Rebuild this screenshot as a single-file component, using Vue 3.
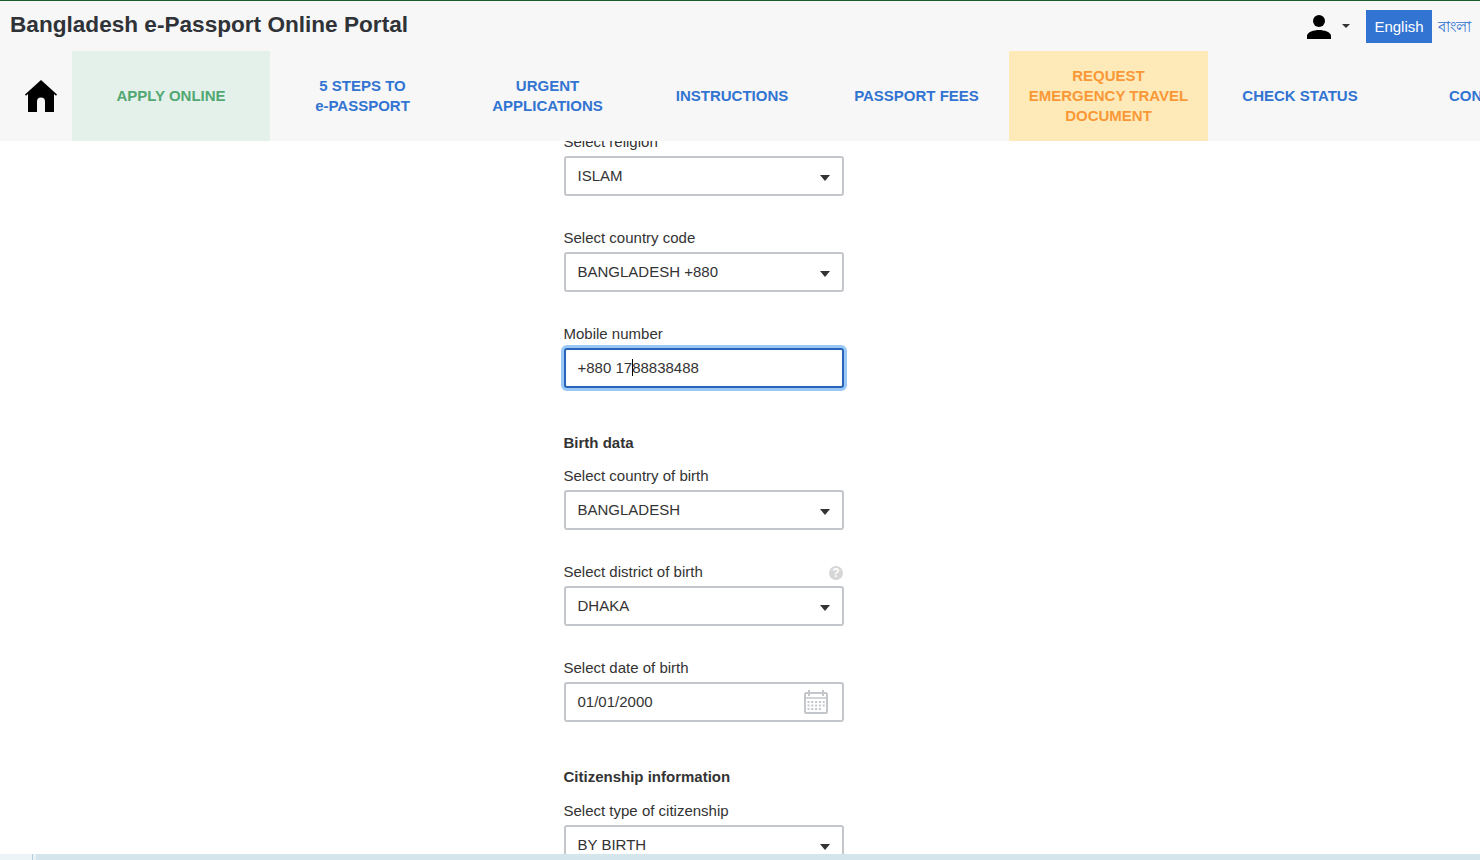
<script setup>
import { reactive } from 'vue'

const menu = [
    { lines: ["APPLY ONLINE"], type: "apply" },
    { lines: ["5 STEPS TO", "e-PASSPORT"] },
    { lines: ["URGENT", "APPLICATIONS"] },
    { lines: ["INSTRUCTIONS"] },
    { lines: ["PASSPORT FEES"] },
    { lines: ["REQUEST", "EMERGENCY TRAVEL", "DOCUMENT"], type: "emergency" },
    { lines: ["CHECK STATUS"] },
    { lines: ["CONTACT"] }
]

const sections = reactive([
    {
        id: "personal",
        fields: [
            { label: "Select religion", value: "ISLAM", type: "select" },
            { label: "Select country code", value: "BANGLADESH +880", type: "select" },
            { label: "Mobile number", value: "+880 17", rest: "88838488", type: "text" }
        ]
    },
    {
        id: "birth",
        title: "Birth data",
        fields: [
            { label: "Select country of birth", value: "BANGLADESH", type: "select" },
            { label: "Select district of birth", value: "DHAKA", type: "select", help: true },
            { label: "Select date of birth", value: "01/01/2000", type: "date" }
        ]
    },
    {
        id: "citizenship",
        title: "Citizenship information",
        fields: [
            { label: "Select type of citizenship", value: "BY BIRTH", type: "select" }
        ]
    }
])
</script>

<template>
    <div class="page">
        <header class="header">
            <div class="header__top">
                <h1 class="header__title">Bangladesh e-Passport Online Portal</h1>
                <div class="header__right">
                    <a href="#" class="user" @click.prevent>
                        <svg class="user__icon" viewBox="0 0 24 24">
                            <circle cx="12" cy="6" r="6" />
                            <path d="M0 24v-3c0-4 7-6 12-6s12 2 12 6v3z" />
                        </svg>
                        <svg class="user__arrow" viewBox="0 0 8 4"><path d="M0 0h8L4 4z" /></svg>
                    </a>
                    <a href="#" class="lang lang--active" @click.prevent>English</a>
                    <a href="#" class="lang lang--bn" @click.prevent>বাংলা</a>
                </div>
            </div>
            <nav class="menu">
                <a href="#" class="menu__home" @click.prevent>
                    <svg class="home__icon" viewBox="0 0 32 32">
                        <path d="M16 0l16 14.500-1 1.200L29 14v18h-9V21.500a4 4 0 0 0-8 0V32H3V14l-2 1.700-1-1.200z" />
                    </svg>
                </a>
                <a v-for="item in menu" :key="item.lines[0]" href="#" class="menu__item" :class="item.type ? 'menu__item--' + item.type : ''" @click.prevent>
                    <span v-for="line in item.lines" :key="line">{{ line }}</span>
                </a>
            </nav>
        </header>

        <main class="content">
            <form class="form" @submit.prevent>
                <section v-for="section in sections" :key="section.id" class="section" :class="'section--' + section.id">
                    <h2 v-if="section.title" class="section__title">{{ section.title }}</h2>
                    <div v-for="field in section.fields" :key="field.label" class="field">
                        <div class="field__head">
                            <label class="field__label">{{ field.label }}</label>
                            <span v-if="field.help" class="field__help">?</span>
                        </div>
                        <div class="field__box" :class="{ 'field__box--focus': field.rest }">
                            <span class="field__value">{{ field.value }}<i v-if="field.rest" class="caret"></i>{{ field.rest }}</span>
                            <svg v-if="field.type === 'select'" class="field__arrow" viewBox="0 0 10 6"><path d="M0 0h10L5 6z" /></svg>
                            <svg v-if="field.type === 'date'" class="field__calendar" viewBox="0 0 24 24">
                                <rect x="1" y="3" width="22" height="20" rx="1.5" fill="none" stroke="#c3c7cb" stroke-width="2" />
                                <path d="M1 8h22" fill="none" stroke="#c3c7cb" stroke-width="1.500" />
                                <path d="M5 0v6M19 0v6" fill="none" stroke="#c3c7cb" stroke-width="2" />
                                <path d="M3.500 12h17.500M3.500 15.500h17.500M3.500 19h13.500" fill="none" stroke="#c3c7cb" stroke-width="2" stroke-dasharray="2 1.800" />
                            </svg>
                        </div>
                    </div>
                </section>
            </form>
        </main>

        <footer class="bottom">
            <div class="bottom__start"></div>
            <div class="bottom__bar"></div>
        </footer>
    </div>
</template>

<style>
body {
    margin: 0;
    background-color: #ffffff;
}
</style>

<style scoped>
.page {
    display: flex;
    flex-direction: column;
    height: 860px;
    overflow: hidden;
    font-family: "Liberation Sans", Arial, "Noto Sans", sans-serif;
    font-size: 15px;
    line-height: 20px;
    color: #333333;
}

a {
    text-decoration: none;
}

.header {
    flex: none;
    box-sizing: border-box;
    height: 141px;
    border-top: 1px solid #1c5a2b;
    background-color: #f7f7f7;
}

.header__top {
    display: flex;
    justify-content: space-between;
    height: 50px;
}

.header__title {
    margin: 0;
    padding: 9px 0 0 10px;
    font-size: 22.6px;
    line-height: 30px;
    color: #2f3237;
}

.header__right {
    display: flex;
    align-items: flex-start;
    padding-top: 9px;
}

.user {
    display: flex;
    align-items: flex-start;
    padding-top: 5px;
    margin-right: 16px;
}

.user__icon {
    width: 24px;
    height: 24px;
    margin-right: 11px;
    fill: #000000;
}

.user__arrow {
    width: 8px;
    height: 4px;
    margin-top: 9px;
    fill: #333333;
}

.lang {
    line-height: 33px;
    color: #3174d1;
}

.lang--active {
    width: 66px;
    margin-right: 6px;
    text-align: center;
    color: #ffffff;
    background-color: #3174d1;
}

.lang--bn {
    width: 42px;
}

.menu {
    display: grid;
    grid-template-columns: 72px 198px 185px 185px 184px 185px 199px 184px 186px;
    height: 90px;
    overflow: hidden;
}

.menu__home {
    padding: 29px 0 0 25px;
}

.home__icon {
    display: block;
    width: 32px;
    height: 32px;
}

.menu__item {
    display: flex;
    flex-direction: column;
    justify-content: center;
    align-items: center;
    font-weight: bold;
    white-space: nowrap;
    color: #3174d1;
}

.menu__item--apply {
    color: #52a873;
    background-color: #e4f1ea;
}

.menu__item--emergency {
    color: #f99837;
    background-color: #feeab9;
}

.content {
    flex: 1;
    min-height: 0;
    overflow: hidden;
}

.form {
    width: 280px;
    margin: -9px 0 0 564px;
}

.section__title {
    margin: 45px 0 13px -0.5px;
    font-size: 15px;
    line-height: 20px;
}

.section--citizenship .section__title {
    margin-bottom: 14px;
}

.field + .field {
    margin-top: 32px;
}

.field__head {
    display: flex;
    justify-content: space-between;
    height: 20px;
    margin: 0 0 4px -0.5px;
}

.field__help {
    width: 14px;
    height: 14px;
    margin: 4px 1px 0 0;
    border-radius: 50%;
    font-size: 12px;
    font-weight: bold;
    line-height: 14px;
    text-align: center;
    color: #ffffff;
    background-color: #d6d6d6;
}

.field__box {
    display: flex;
    justify-content: space-between;
    box-sizing: border-box;
    height: 40px;
    padding: 8px 13px 0 11.5px;
    border: 2px solid #c3c7cb;
    border-radius: 3px;
    background-color: #ffffff;
}

.field__box--focus {
    border-color: #2964ba;
    box-shadow: 0 0 0 3px #99c8f7;
}

.field__arrow {
    width: 10px;
    height: 6px;
    margin-top: 9px;
    margin-right: -1px;
    fill: #333333;
}

.field__calendar {
    width: 24px;
    height: 24px;
    margin-top: -2px;
    margin-right: 1px;
}

.caret {
    display: inline-block;
    width: 1px;
    height: 17px;
    margin-right: -1px;
    vertical-align: -3px;
    background-color: #000000;
}

.bottom {
    display: flex;
    flex: none;
    height: 6px;
    background-color: #e8f1f6;
}

.bottom__start {
    width: 32px;
    margin-right: 3px;
    border-right: 1px solid #b5cddd;
    background-color: #edf4f8;
}

.bottom__bar {
    flex: 1;
    background-color: #d5e5ec;
}
</style>
